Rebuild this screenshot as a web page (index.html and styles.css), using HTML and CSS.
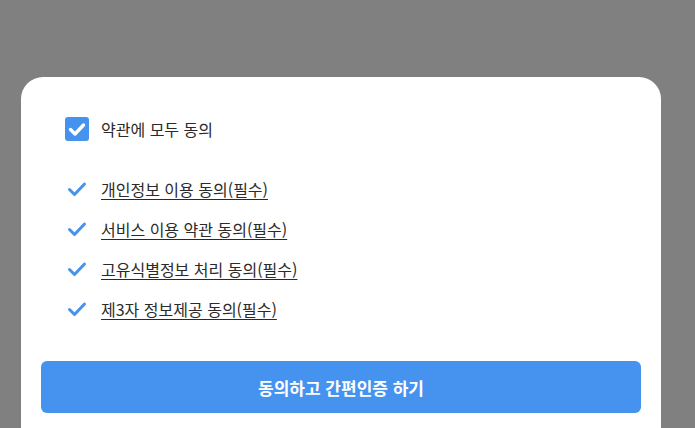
FILE: index.html
```html
<!DOCTYPE html>
<html lang="ko">
<head>
<meta charset="UTF-8">
<meta name="viewport" content="width=device-width, initial-scale=1.0">
<title>약관 동의</title>
<link rel="stylesheet" href="styles.css">
</head>
<body>
<div class="dim">
    <div class="sheet">
        <div class="terms">
            <label class="all-agree">
                <span class="box">
                    <svg viewBox="0 0 24 24" width="24" height="24"><path d="M5.5 12.5l4.5 4.5 8.5-9" fill="none" stroke="#fff" stroke-width="3.4" stroke-linecap="round" stroke-linejoin="round"/></svg>
                </span>
                약관에 모두 동의
            </label>
            <ul class="term-list">
                <li>
                    <svg class="tick" viewBox="0 0 24 24" width="24" height="24"><path d="M4.5 12.5l5 5 10-10.5" fill="none" stroke="#4593ef" stroke-width="3" stroke-linecap="round" stroke-linejoin="round"/></svg>
                    <a href="#">개인정보 이용 동의(필수)</a>
                </li>
                <li>
                    <svg class="tick" viewBox="0 0 24 24" width="24" height="24"><path d="M4.5 12.5l5 5 10-10.5" fill="none" stroke="#4593ef" stroke-width="3" stroke-linecap="round" stroke-linejoin="round"/></svg>
                    <a href="#">서비스 이용 약관 동의(필수)</a>
                </li>
                <li>
                    <svg class="tick" viewBox="0 0 24 24" width="24" height="24"><path d="M4.5 12.5l5 5 10-10.5" fill="none" stroke="#4593ef" stroke-width="3" stroke-linecap="round" stroke-linejoin="round"/></svg>
                    <a href="#">고유식별정보 처리 동의(필수)</a>
                </li>
                <li>
                    <svg class="tick" viewBox="0 0 24 24" width="24" height="24"><path d="M4.5 12.5l5 5 10-10.5" fill="none" stroke="#4593ef" stroke-width="3" stroke-linecap="round" stroke-linejoin="round"/></svg>
                    <a href="#">제3자 정보제공 동의(필수)</a>
                </li>
            </ul>
        </div>
        <button type="button" class="btn">동의하고 간편인증 하기</button>
    </div>
</div>
</body>
</html>
```

FILE: styles.css
```css
body {
    margin: 0;
    font-family: "Noto Sans CJK KR", "Noto Sans", sans-serif;
    background: #808080;
    overflow: hidden;
}
.dim {
    height: 428px;
    padding: 77px 34px 0 21px;
    box-sizing: border-box;
}
.sheet {
    background: #fff;
    border-radius: 22px 22px 0 0;
    padding: 40px 20px 15px;
}
.terms {
    padding: 0 24px;
}
.all-agree {
    display: flex;
    align-items: center;
    gap: 12px;
    font-size: 16px;
    color: #2a2a2a;
    height: 24px;
}
.box {
    width: 24px;
    height: 24px;
    border-radius: 3px;
    background: #4593ef;
    display: flex;
}
.term-list {
    list-style: none;
    margin: 36px 0 0;
    padding: 0;
}
.term-list li {
    display: flex;
    align-items: center;
    gap: 12px;
    height: 24px;
    margin-bottom: 16px;
}
.term-list a {
    color: #2a2a2a;
    font-size: 16px;
    text-decoration: underline;
    text-underline-offset: 3px;
}
.btn {
    width: 100%;
    height: 52px;
    margin-top: 24px;
    border: none;
    border-radius: 6px;
    background: #4593ef;
    color: #fff;
    font-family: inherit;
    font-size: 17px;
    font-weight: bold;
    cursor: pointer;
}
```
